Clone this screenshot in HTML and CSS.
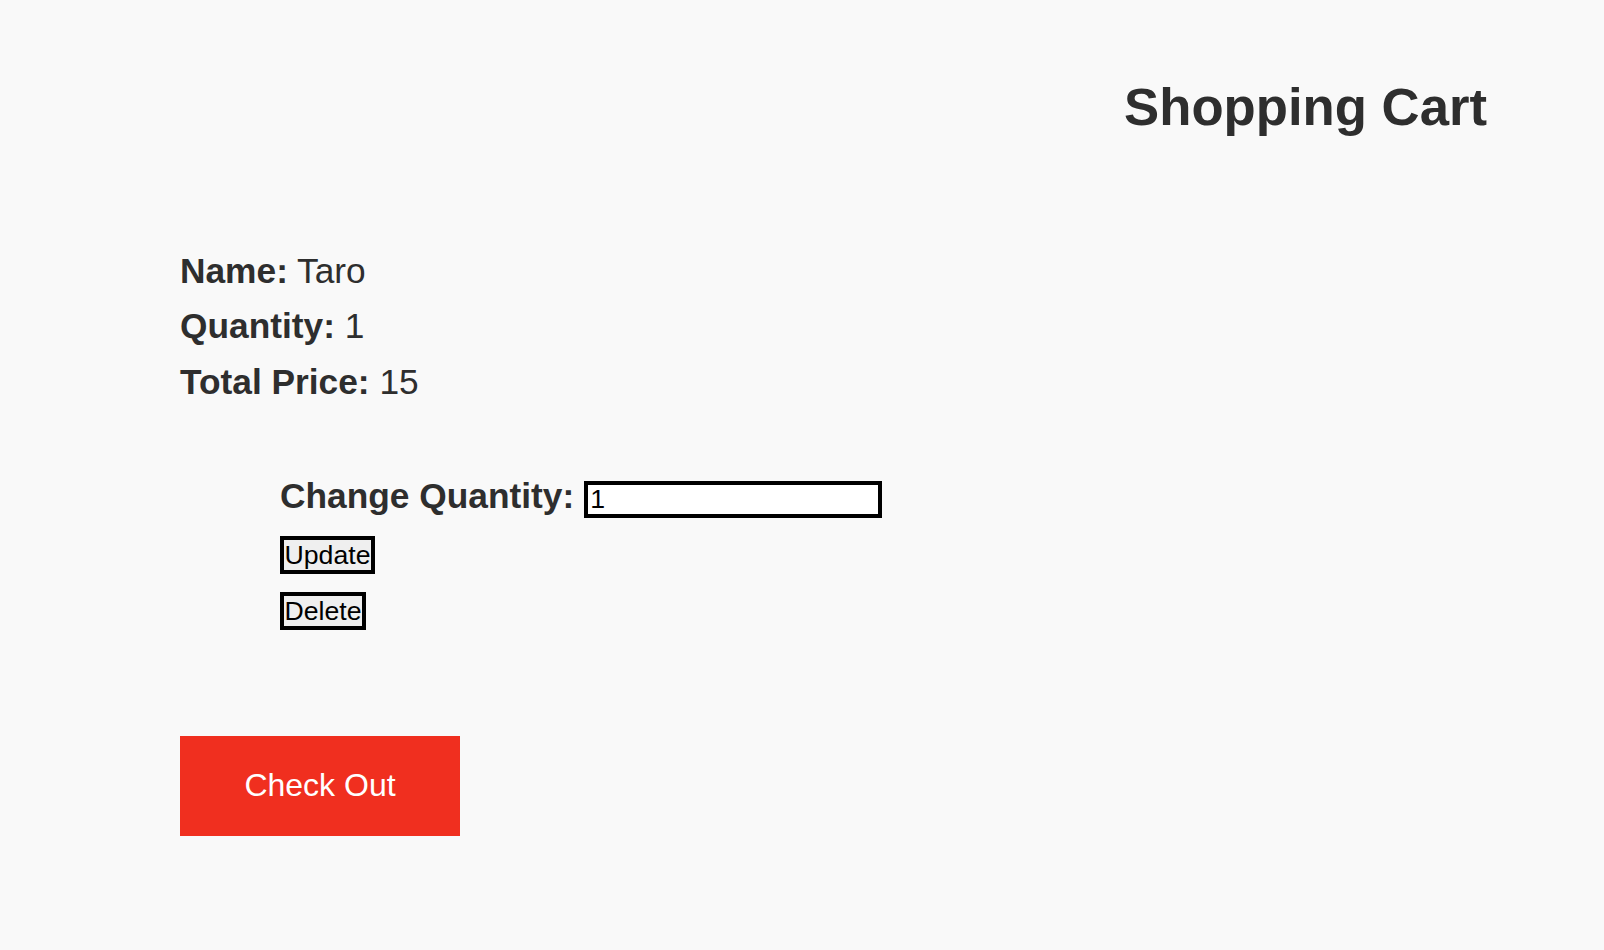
FILE: index.html
```html
<!DOCTYPE html>
<html lang="en">
<head>
<meta charset="utf-8">
<title>Shopping Cart</title>
<link rel="stylesheet" href="styles.css">
</head>
<body>
<div class="page">
  <h1 class="title">Shopping Cart</h1>
  <div class="details">
    <div class="line"><span class="key">Name:</span> Taro</div>
    <div class="line"><span class="key">Quantity:</span> 1</div>
    <div class="line"><span class="key">Total Price:</span> 15</div>
  </div>
  <form class="form">
    <div class="form-row">
      <label class="qty-label" for="qty">Change Quantity:</label>
      <input class="qty-input" id="qty" type="text" value="1">
    </div>
    <div class="actions">
      <button class="small-btn" type="button">Update</button>
      <button class="small-btn" type="button">Delete</button>
    </div>
  </form>
  <button class="checkout" type="button">Check Out</button>
</div>
</body>
</html>
```

FILE: styles.css
```css
html, body {
  margin: 0;
  padding: 0;
  background: #f9f9f9;
}
body {
  font-family: "Liberation Sans", Arial, sans-serif;
  color: #2e2e2e;
}
.page {
  padding: 77px 117px 0 180px;
  display: flex;
  flex-direction: column;
  align-items: flex-start;
}
.title {
  align-self: stretch;
  margin: 0;
  text-align: right;
  font-size: 52.7px;
  line-height: 60px;
  font-weight: bold;
}
.details {
  margin-top: 106px;
  font-size: 35.3px;
  line-height: 55.33px;
}
.key {
  font-weight: bold;
}
.form {
  margin: 67px 0 0 0;
  padding-left: 100px;
  display: flex;
  flex-direction: column;
  align-items: flex-start;
}
.form-row {
  display: flex;
  align-items: baseline;
}
.qty-label {
  font-size: 35.3px;
  font-weight: bold;
  margin-right: 10px;
}
.qty-input {
  box-sizing: border-box;
  width: 298px;
  height: 37px;
  border: 4px solid #000;
  border-radius: 0;
  padding: 0 2px;
  margin: 0;
  background: #fff;
  font-family: "Liberation Sans", Arial, sans-serif;
  font-size: 26.67px;
  color: #000;
  outline: none;
}
.actions {
  margin-top: 18px;
  display: flex;
  flex-direction: column;
  align-items: flex-start;
  gap: 18px;
}
.small-btn {
  box-sizing: border-box;
  height: 38px;
  border: 4px solid #000;
  border-radius: 0;
  padding: 0 0.5px;
  margin: 0;
  background: #efefef;
  font-family: "Liberation Sans", Arial, sans-serif;
  font-size: 26.67px;
  line-height: 30px;
  color: #000;
}
.checkout {
  margin-top: 106px;
  width: 280px;
  height: 100px;
  border: none;
  border-radius: 0;
  padding: 0;
  background: #f02f1f;
  color: #fff;
  font-family: "Liberation Sans", Arial, sans-serif;
  font-size: 32px;
}
```
